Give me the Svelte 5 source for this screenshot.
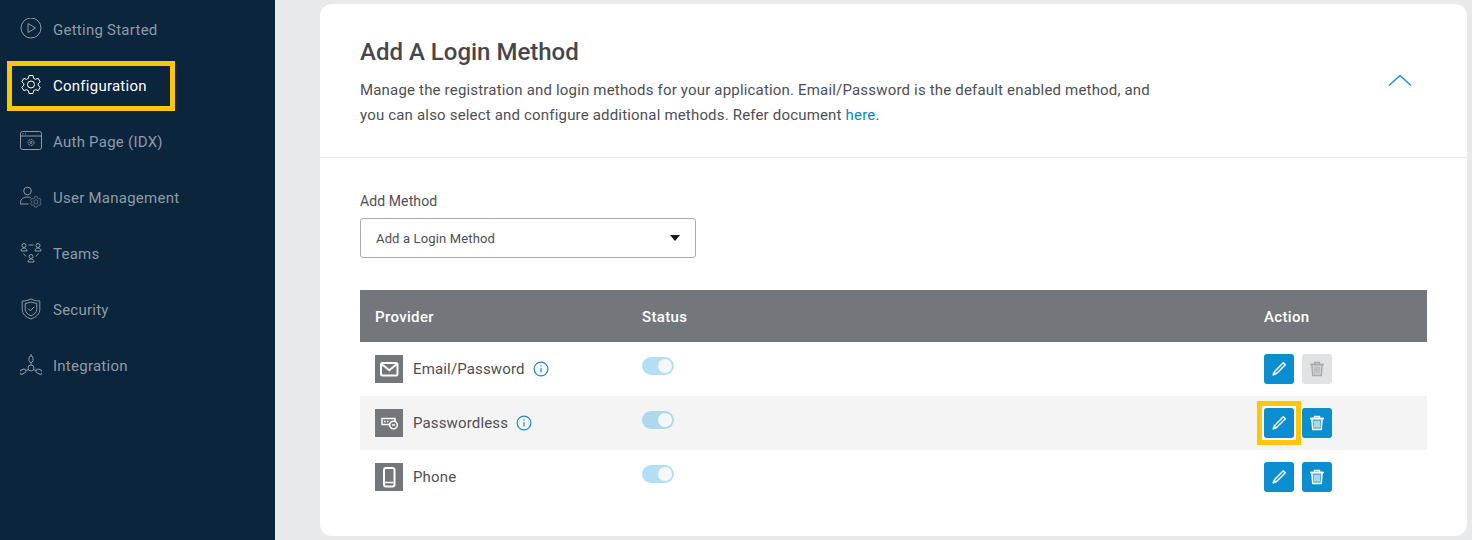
<script>
	const nav = [
		{ label: 'Getting Started', icon: 'play' },
		{ label: 'Configuration', icon: 'gear', active: true },
		{ label: 'Auth Page (IDX)', icon: 'page' },
		{ label: 'User Management', icon: 'user' },
		{ label: 'Teams', icon: 'teams' },
		{ label: 'Security', icon: 'shield' },
		{ label: 'Integration', icon: 'hub' }
	]

	const rows = [
		{ name: 'Email/Password', icon: 'mail', info: true, locked: true },
		{ name: 'Passwordless', icon: 'key', info: true, marked: true, shaded: true },
		{ name: 'Phone', icon: 'phone' }
	]

	const gearPath =
		'M9 1h4l.6 2.800 1.900 1 2.700-.9 2 3.400-2.100 1.900v1.600l2.100 1.900-2 3.400-2.700-.9-1.900 1-.6 2.800H9l-.6-2.800-1.900-1-2.700.9-2-3.400 2.100-1.900V9.200L1.800 7.300l2-3.400 2.700.9 1.900-1z'
</script>

{#snippet navIcon(name)}
	<svg class="nav-icon" viewBox="0 0 22 22" fill="none" stroke="currentColor" stroke-width="1" stroke-linejoin="round">
		{#if name === 'play'}
			<circle cx="11" cy="10" r="10" />
			<path d="M8 5.500v9l7.500-4.500z" />
		{:else if name === 'gear'}
			<g transform="translate(0 .5)">
				<path d={gearPath} />
				<circle cx="11" cy="10" r="3.500" />
			</g>
		{:else if name === 'page'}
			<rect x="0.500" y="1.500" width="21" height="18" rx="2" />
			<path d="M.5 6h21" />
			<path d="M2.500 3.800h1M5 3.800h1" />
			<circle cx="11" cy="12.500" r="3" stroke-dasharray="2 .7" />
			<circle cx="11" cy="12.500" r="1" />
		{:else if name === 'user'}
			<circle cx="7.500" cy="5" r="3.800" />
			<path d="M.5 18v-1.500c0-3.500 3-5.500 7-5.500 1.200 0 2.300.2 3.200.6M.5 18h8" />
			<g transform="translate(9.500 10) scale(.58)"><path d={gearPath} /><circle cx="11" cy="10" r="3.500" /></g>
		{:else if name === 'teams'}
			<circle cx="4" cy="3.500" r="2" />
			<path d="M1 9c0-2 1.300-3 3-3s3 1 3 3z" />
			<circle cx="18" cy="3.500" r="2" />
			<path d="M15 9c0-2 1.300-3 3-3s3 1 3 3z" />
			<circle cx="11" cy="14.500" r="2" />
			<path d="M8 20c0-2 1.300-3 3-3s3 1 3 3z" />
			<path d="M8.500 3h5M3.500 11.500l2.500 3M18.500 11.500l-2.500 3" />
		{:else if name === 'shield'}
			<path d="M11 1c3 1.400 6 2 8.800 2v8.500c0 4.500-3.500 7.500-8.800 9.500-5.300-2-8.800-5-8.800-9.500V3C5 3 8 2.400 11 1z" />
			<path d="M11 4c2 .8 4 1.200 5.800 1.300v6c0 3-2.300 5-5.800 6.500-3.500-1.500-5.800-3.500-5.800-6.500v-6C7 5.200 9 4.800 11 4z" />
			<path d="M8 10.500l2.300 2.300 4-4" />
		{:else}
			<circle cx="11" cy="14" r="3" />
			<rect x="9" y="2" width="4" height="6.500" rx="2" />
			<path d="M11 0v2M11 8.500V11" />
			<rect x="-.5" y="15.500" width="6.500" height="4" rx="2" transform="rotate(-25 3 17.500)" />
			<rect x="16" y="15.500" width="6.500" height="4" rx="2" transform="rotate(25 19 17.500)" />
			<path d="M8.500 15.500l-2.500 1M13.500 15.500l2.500 1" />
		{/if}
	</svg>
{/snippet}

{#snippet providerIcon(name)}
	<span class="provider-icon">
		<svg viewBox="0 0 28 28" width="28" height="28" fill="none" stroke="#fff" stroke-width="2">
			{#if name === 'mail'}
				<rect x="6" y="8" width="16.500" height="12.500" rx="1.500" />
				<path d="M6.500 9l7.750 6.200L22 9" />
			{:else if name === 'key'}
				<rect x="7" y="9.500" width="13" height="6" stroke-width="1.500" />
				<path d="M9 12.500h1.500M12 12.500h1.500" stroke-width="1.500" />
				<circle cx="18.500" cy="16" r="3.800" fill="#73777b" stroke-width="1.500" />
				<path d="M17 16h3" stroke-width="1.500" />
			{:else}
				<rect x="9" y="5" width="10.500" height="18.500" rx="2" />
				<path d="M10 19.500h8.500" stroke-width="1.500" />
			{/if}
		</svg>
	</span>
{/snippet}

<div class="page">
	<aside class="sidebar">
		{#each nav as item}
			<a class="nav-item" class:active={item.active} href="#top">
				{@render navIcon(item.icon)}
				<span>{item.label}</span>
			</a>
		{/each}
	</aside>

	<main class="main">
		<section class="card">
			<header class="card-head">
				<div class="intro">
					<h1>Add A Login Method</h1>
					<p>
						Manage the registration and login methods for your application. Email/Password is the default enabled method, and
						you can also select and configure additional methods. Refer document <a href="#top">here</a>.
					</p>
				</div>
				<svg class="chevron" viewBox="0 0 24 12" width="24" height="12" fill="none" stroke="#1a94d6" stroke-width="1.500">
					<path d="M1 11.500L12 1.500l11 10" />
				</svg>
			</header>

			<div class="card-body">
				<div class="field-label">Add Method</div>
				<div class="select">
					<span>Add a Login Method</span>
					<i class="caret"></i>
				</div>

				<div class="table">
					<div class="row head">
						<div class="col-provider">Provider</div>
						<div class="col-status">Status</div>
						<div class="col-action">Action</div>
					</div>
					{#each rows as row}
						<div class="row" class:shaded={row.shaded}>
							<div class="col-provider provider">
								{@render providerIcon(row.icon)}
								<span>{row.name}</span>
								{#if row.info}
									<svg class="info" viewBox="0 0 16 16" width="16" height="16" fill="none" stroke="#1a86d0" stroke-width="1.200">
										<circle cx="8" cy="8" r="6.900" />
										<path d="M8 7v4.500M8 4.300v1.300" />
									</svg>
								{/if}
							</div>
							<div class="col-status">
								<span class="toggle"><i></i></span>
							</div>
							<div class="col-action actions">
								<button class="btn" class:marked={row.marked} aria-label="Edit">
									<svg viewBox="0 0 16 16" width="16" height="16" fill="none" stroke="#fff" stroke-width="1.500" stroke-linejoin="round">
										<path d="M12.300 1.800l2 2-8.700 8.700-3.400 1.400 1.400-3.400z" />
										<path d="M2.400 13.700l1-2.800 1.800 1.800z" fill="#fff" stroke-width=".6" />
									</svg>
								</button>
								<button class="btn" class:disabled={row.locked} aria-label="Delete">
									<svg viewBox="0 0 16 16" width="16" height="16" fill="none" stroke="currentColor" stroke-width="1.400">
										<path d="M1 3.500h14M5.500 3.200V1.500h5v1.700" />
										<path d="M2.800 3.500l.9 11h8.600l.9-11z" fill="currentColor" fill-opacity=".3" />
										<path d="M6 6v6.500M8 6v6.500M10 6v6.500" stroke-width="1" />
									</svg>
								</button>
							</div>
						</div>
					{/each}
				</div>
			</div>
		</section>
	</main>
</div>

<style>
	:global(body) {
		margin: 0;
		background: #e8e9eb;
	}

	.page {
		display: flex;
		width: 1472px;
		height: 540px;
		overflow: hidden;
		font-family: Roboto, "Liberation Sans", sans-serif;
		color: #4d4f53;
	}

	.sidebar {
		width: 275px;
		flex-shrink: 0;
		padding-top: 1px;
		background: #0a253c;
		box-sizing: border-box;
	}

	.nav-item {
		position: relative;
		display: flex;
		align-items: center;
		gap: 11px;
		height: 56px;
		padding-left: 20px;
		color: #8f9ba6;
		font-size: 15px;
		letter-spacing: 0.25px;
		text-decoration: none;
	}

	.nav-item span {
		margin-top: 2px;
	}

	.nav-item.active {
		color: #fff;
	}

	.nav-item.active::after {
		content: '';
		position: absolute;
		left: 7px;
		top: 4px;
		width: 158px;
		height: 40px;
		border: 5px solid #fdc60a;
	}

	.nav-icon {
		width: 22px;
		height: 22px;
		flex-shrink: 0;
	}

	.main {
		flex: 1;
		padding: 4px 5px 4px 45px;
		min-width: 0;
	}

	.card {
		height: 532px;
		background: #fff;
		border-radius: 12px;
		overflow: hidden;
	}

	.card-head {
		display: flex;
		align-items: center;
		justify-content: space-between;
		height: 153px;
		padding: 0 55px 0 40px;
		border-bottom: 1px solid #e8e9eb;
		box-sizing: content-box;
	}

	.intro {
		width: 800px;
		padding-top: 3px;
	}

	h1 {
		margin: 0 0 10px;
		font-size: 24px;
		line-height: 32px;
		font-weight: 500;
		color: #45474a;
	}

	.intro p {
		margin: 0;
		font-size: 15px;
		line-height: 25px;
		letter-spacing: 0.18px;
	}

	.intro a {
		color: #0b85c8;
		text-decoration: none;
	}

	.chevron {
		margin-bottom: 2px;
	}

	.card-body {
		padding: 33px 40px 0;
	}

	.field-label {
		font-size: 14px;
		line-height: 20px;
		margin-bottom: 7px;
		letter-spacing: 0.1px;
	}

	.select {
		display: flex;
		align-items: center;
		justify-content: space-between;
		width: 336px;
		height: 40px;
		padding: 0 15px;
		border: 1px solid #a9abae;
		border-radius: 3px;
		box-sizing: border-box;
		font-size: 13px;
		letter-spacing: 0.15px;
	}

	.caret {
		border-left: 5.500px solid transparent;
		border-right: 5.500px solid transparent;
		border-top: 6px solid #1a1a1a;
	}

	.table {
		margin-top: 32px;
		width: 1067px;
	}

	.row {
		display: flex;
		align-items: center;
		height: 54px;
		padding-left: 15px;
		font-size: 15px;
		box-sizing: border-box;
	}

	.row.head {
		height: 52px;
		padding-top: 2px;
		background: #73777b;
		color: #fff;
		font-weight: 500;
		letter-spacing: 0.35px;
	}

	.row.shaded {
		background: #f4f4f4;
	}

	.col-provider {
		width: 267px;
	}

	.col-status {
		width: 622px;
	}

	.provider {
		display: flex;
		align-items: center;
		gap: 10px;
		letter-spacing: 0.15px;
	}

	.provider-icon {
		display: flex;
		width: 28px;
		height: 28px;
		background: #73777b;
	}

	.info {
		margin-left: -2px;
	}

	.toggle {
		position: relative;
		top: -3px;
		display: block;
		width: 32px;
		height: 18px;
		border-radius: 9px;
		background: #b3dff4;
	}

	.shaded .toggle {
		background: #aed8ee;
	}

	.toggle i {
		position: absolute;
		right: 2px;
		top: 2px;
		width: 14px;
		height: 14px;
		border-radius: 50%;
		background: #f4f8fa;
	}

	.actions {
		display: flex;
		gap: 8px;
	}

	.btn {
		position: relative;
		display: flex;
		align-items: center;
		justify-content: center;
		width: 30px;
		height: 30px;
		padding: 0;
		border: 0;
		border-radius: 3px;
		background: #0a8ecf;
		color: #fff;
	}

	.btn.disabled {
		background: #e1e2e3;
		color: #a9abae;
	}

	.btn.marked::after {
		content: '';
		position: absolute;
		left: -7px;
		top: -7px;
		width: 44px;
		height: 44px;
		box-sizing: border-box;
		border: 5px solid #fdc60a;
		box-shadow: inset 0 0 0 2px #fff;
	}
</style>
